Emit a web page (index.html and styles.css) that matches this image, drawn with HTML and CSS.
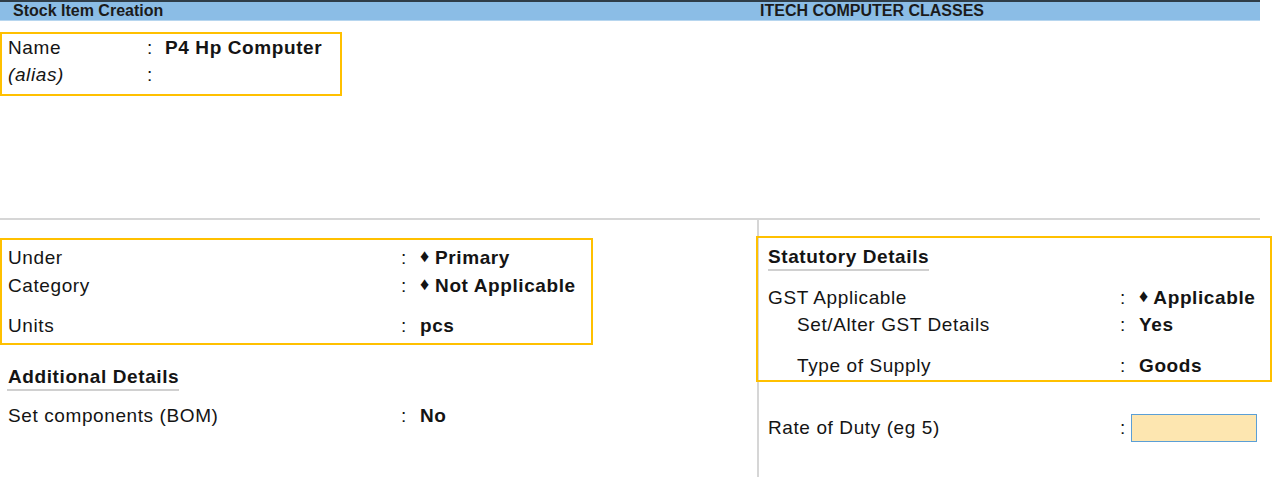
FILE: index.html
```html
<!DOCTYPE html>
<html lang="en">
<head>
  <meta charset="UTF-8">
  <title>Stock Item Creation</title>
  <link rel="stylesheet" href="styles.css">
</head>
<body>
  <div class="top">
    <div class="titlebar">
      <div class="title">Stock Item Creation</div>
      <div class="company">ITECH COMPUTER CLASSES</div>
    </div>
    <div class="box name-box">
      <div class="row">
        <span class="label name-label">Name</span>
        <span class="colon name-colon">:</span>
        <span class="value">P4 Hp Computer</span>
      </div>
      <div class="row">
        <span class="label name-label alias">(alias)</span>
        <span class="colon name-colon">:</span>
      </div>
    </div>
  </div>

  <div class="panes">
    <div class="left">
      <div class="box group-box">
        <div class="row">
          <span class="label">Under</span>
          <span class="colon">:</span>
          <span class="value"><span class="dia">&#9830;</span> Primary</span>
        </div>
        <div class="row">
          <span class="label">Category</span>
          <span class="colon">:</span>
          <span class="value"><span class="dia">&#9830;</span> Not Applicable</span>
        </div>
        <div class="row gap">
          <span class="label">Units</span>
          <span class="colon">:</span>
          <span class="value">pcs</span>
        </div>
      </div>

      <div class="heading add-heading">Additional Details</div>
      <div class="row bom">
        <span class="label">Set components (BOM)</span>
        <span class="colon">:</span>
        <span class="value">No</span>
      </div>
    </div>

    <div class="right">
      <div class="box stat-box">
        <div class="heading">Statutory Details</div>
        <div class="row first">
          <span class="label r-label">GST Applicable</span>
          <span class="colon">:</span>
          <span class="value"><span class="dia">&#9830;</span> Applicable</span>
        </div>
        <div class="row">
          <span class="label r-label sub">Set/Alter GST Details</span>
          <span class="colon">:</span>
          <span class="value">Yes</span>
        </div>
        <div class="row gap">
          <span class="label r-label sub">Type of Supply</span>
          <span class="colon">:</span>
          <span class="value">Goods</span>
        </div>
      </div>
      <div class="row rate">
        <span class="label r-label">Rate of Duty (eg 5)</span>
        <span class="colon rate-colon">:</span>
        <span class="field"></span>
      </div>
    </div>
  </div>
</body>
</html>
```

FILE: styles.css
```css
html, body {
  margin: 0;
  padding: 0;
  background: #fff;
  font-family: "Liberation Sans", Arial, sans-serif;
  font-size: 19px;
  letter-spacing: 0.6px;
  color: #141414;
}
body {
  width: 1273px;
  height: 477px;
  overflow: hidden;
}

/* top area */
.top {
  width: 1260px;
  height: 218px;
  border-bottom: 2px solid #d6d6d6;
}
.titlebar {
  display: flex;
  align-items: center;
  height: 18px;
  border-top: 2px solid #2f3d48;
  border-bottom: 1px solid #b7d6ef;
  background: #8bbde6;
  font-size: 16px;
  font-weight: bold;
  letter-spacing: 0;
  color: #1b1b1b;
}
.title {
  width: 747px;
  padding-left: 13px;
}

.box {
  border: 2px solid #ffc000;
  box-sizing: border-box;
}
.row {
  display: flex;
  align-items: center;
  height: 28px;
  white-space: nowrap;
}
.label {
  width: 393px;
}
.colon {
  width: 19px;
  letter-spacing: 0;
}
.value {
  font-weight: bold;
}
.dia {
  font-size: 18px;
  letter-spacing: 0;
  position: relative;
  top: -2px;
}

.name-box {
  width: 342px;
  margin-top: 11px;
  padding: 0 6px 6px 6px;
}
.name-box .row {
  height: 27px;
}
.name-label {
  width: 139px;
}
.name-colon {
  width: 18px;
}
.alias {
  font-style: italic;
}

/* lower panes */
.panes {
  display: flex;
  height: 257px;
}
.left {
  width: 757px;
}
.group-box {
  width: 593px;
  margin-top: 18px;
  padding: 4px 6px 3px 6px;
}
.row.gap {
  margin-top: 12px;
}

.heading {
  display: inline-block;
  font-weight: bold;
  line-height: 24px;
  border-bottom: 2px solid #d0d0d0;
}
.add-heading {
  margin: 20px 0 0 7px;
  padding-left: 1px;
}
.bom {
  margin-top: 11px;
  padding-left: 8px;
}

.right {
  flex: 1;
  border-left: 2px solid #d6d6d6;
}
.stat-box {
  width: 516px;
  margin: 16px 0 0 -3px;
  padding: 7px 0 1px 10px;
}
.stat-box .row {
  height: 27px;
}
.stat-box .row.first {
  margin-top: 13px;
}
.stat-box .row.gap {
  margin-top: 14px;
}
.r-label {
  width: 352px;
}
.r-label.sub {
  width: 323px;
  padding-left: 29px;
}
.rate {
  margin-top: 32px;
  padding-left: 9px;
}
.rate-colon {
  width: 11px;
}
.field {
  width: 124px;
  height: 26px;
  background: #fde6b0;
  border: 1px solid #5b9fd6;
}
```
